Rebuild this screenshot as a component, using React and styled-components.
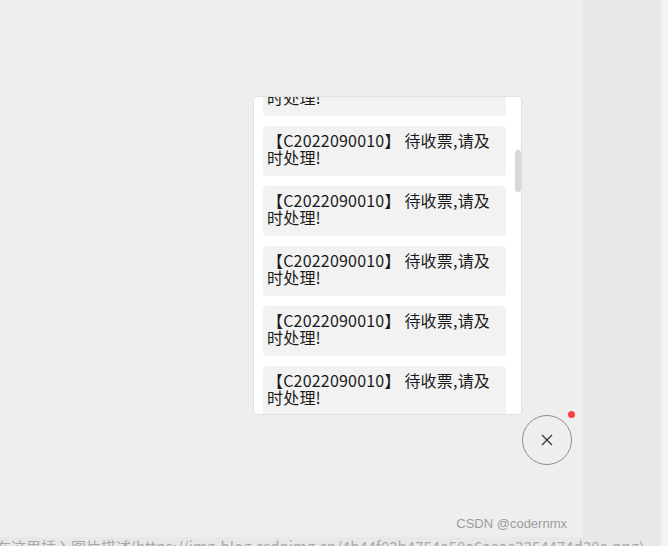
import { useEffect, useRef, useState } from 'react';
import styled, { createGlobalStyle } from 'styled-components';

const GlobalStyle = createGlobalStyle`
    html, body {
        margin: 0;
        padding: 0;
        background: #f4f4f4;
        overflow: hidden;
    }
    body {
        font-family: "Noto Sans CJK SC", "Noto Sans", sans-serif;
    }
`;

const messages = Array.from({ length: 40 }, () => '【C2022090010】 待收票,请及时处理!');

export default function App() {
    const listRef = useRef(null);
    const [thumb, setThumb] = useState({ top: 0, height: 0 });

    // scroll partway down the list and size the thumb to match
    useEffect(() => {
        const el = listRef.current;
        if (!el) return;
        el.scrollTop = 401;
        const update = () => {
            const ratio = el.clientHeight / el.scrollHeight;
            setThumb({ top: el.scrollTop * ratio, height: el.clientHeight * ratio });
        };
        update();
        el.addEventListener('scroll', update);
        return () => el.removeEventListener('scroll', update);
    }, []);

    return (
        <>
            <GlobalStyle />
            <StyledPage>
                <div className="article">
                    <div className="shot">
                        <div className="widget">
                            <Panel>
                                <MessageList ref={listRef}>
                                    {messages.map((text, i) => (
                                        <MessageItem key={i}>{text}</MessageItem>
                                    ))}
                                </MessageList>
                                <ScrollThumb style={{ top: thumb.top, height: thumb.height }} />
                            </Panel>
                            <ToggleButton>
                                <svg width="12" height="12" viewBox="0 0 12 12">
                                    <path d="M1 1 L11 11 M11 1 L1 11" stroke="#333" strokeWidth="1.2" fill="none" />
                                </svg>
                                <Badge />
                            </ToggleButton>
                        </div>
                        <Watermark>CSDN @codernmx</Watermark>
                    </div>
                    <AltText>在这里插入图片描述(https://img-blog.csdnimg.cn/4b44f03b4754a50a6aeae3254474d30a.png)</AltText>
                </div>
            </StyledPage>
        </>
    );
}

const StyledPage = styled.div`
display: flex;
width: 668px;
height: 546px;
overflow: hidden;
    .article {
        width: 661px;
        height: 546px;
        background: #e8e8e8;
        display: flex;
        flex-direction: column;
        overflow: hidden;
    }
    .shot {
        width: 583px;
        height: 537px;
        flex-shrink: 0;
        background: #eeeeee;
        display: flex;
        flex-direction: column;
        box-sizing: border-box;
        padding: 96px 0 0 253px;
    }
    .widget {
        display: flex;
        flex-direction: column;
        flex: 1;
    }
`;

const Panel = styled.div`
position: relative;
width: 269px;
height: 319px;
box-sizing: border-box;
background: #fff;
border: 1px solid #e2e2e2;
border-radius: 4px;
overflow: hidden;
`;

const MessageList = styled.div`
height: 100%;
overflow-y: auto;
box-sizing: border-box;
padding: 0 15px 0 9px;
scrollbar-width: none;
    &::-webkit-scrollbar {
        display: none;
    }
`;

const ScrollThumb = styled.div`
position: absolute;
right: 0;
width: 6px;
background: #d8d8d8;
border-radius: 3px;
`;

const MessageItem = styled.div`
margin-top: 10px;
height: 50px;
box-sizing: border-box;
padding: 6px 10px 10px 4px;
background: #f2f2f2;
border-radius: 4px;
font-size: 16px;
line-height: 17px;
letter-spacing: 0.2px;
color: #1a1a1a;
word-break: break-all;
`;

const ToggleButton = styled.div`
position: relative;
margin-left: 269px;
width: 50px;
height: 50px;
box-sizing: border-box;
border: 1px solid #8c8c8c;
border-radius: 50%;
display: flex;
align-items: center;
justify-content: center;
`;

const Badge = styled.span`
position: absolute;
top: -5px;
left: 45px;
width: 7px;
height: 7px;
border-radius: 50%;
background: #f54343;
`;

const Watermark = styled.div`
align-self: flex-end;
margin: 0 16px 6px 0;
font-family: "Liberation Sans", Arial, sans-serif;
font-size: 13px;
color: #9c9c9c;
`;

const AltText = styled.div`
margin: 1px 0 0 -4px;
white-space: nowrap;
font-size: 15px;
line-height: 18px;
color: #a8a8a8;
`;
